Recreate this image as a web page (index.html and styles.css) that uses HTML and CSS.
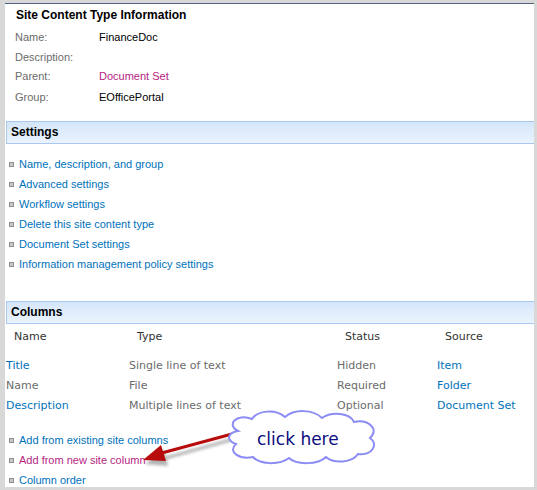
FILE: index.html
```html
<!DOCTYPE html>
<html>
<head>
<meta charset="utf-8">
<link rel="stylesheet" href="styles.css">
</head>
<body>
<div class="frame">
  <div class="page">
    <div class="info">
      <div class="info-title">Site Content Type Information</div>
      <div class="info-row r-name"><span class="lbl">Name:</span><span class="val">FinanceDoc</span></div>
      <div class="info-row r-desc"><span class="lbl">Description:</span><span class="val"></span></div>
      <div class="info-row r-parent"><span class="lbl">Parent:</span><a class="val visited">Document Set</a></div>
      <div class="info-row r-group"><span class="lbl">Group:</span><span class="val">EOfficePortal</span></div>
    </div>

    <div class="section-head settings-head">Settings</div>
    <ul class="links settings-links">
      <li><a>Name, description, and group</a></li>
      <li><a>Advanced settings</a></li>
      <li><a>Workflow settings</a></li>
      <li><a>Delete this site content type</a></li>
      <li><a>Document Set settings</a></li>
      <li><a>Information management policy settings</a></li>
    </ul>

    <div class="section-head columns-head">Columns</div>
    <div class="cols">
      <div class="col-row head">
        <span class="c1">Name</span><span class="c2">Type</span><span class="c3">Status</span><span class="c4">Source</span>
      </div>
      <div class="col-row data first">
        <a class="c1">Title</a><span class="c2">Single line of text</span><span class="c3">Hidden</span><a class="c4">Item</a>
      </div>
      <div class="col-row data">
        <span class="c1">Name</span><span class="c2">File</span><span class="c3">Required</span><a class="c4">Folder</a>
      </div>
      <div class="col-row data">
        <a class="c1">Description</a><span class="c2">Multiple lines of text</span><span class="c3">Optional</span><a class="c4">Document Set</a>
      </div>
    </div>
    <ul class="links column-links">
      <li><a>Add from existing site columns</a></li>
      <li><a class="visited">Add from new site column</a></li>
      <li><a>Column order</a></li>
    </ul>
  </div>

  <svg class="callout" width="537" height="490" viewBox="0 0 537 490">
    <defs>
      <filter id="sh" x="-20%" y="-50%" width="140%" height="200%">
        <feGaussianBlur stdDeviation="1.6"/>
      </filter>
    </defs>
    <g transform="translate(2,4)" opacity="0.45" filter="url(#sh)">
      <line x1="232" y1="435" x2="160" y2="455" stroke="#555" stroke-width="3"/>
      <polygon points="143,460 162,446 166,462" fill="#555"/>
    </g>
    <line x1="232" y1="434" x2="158" y2="454" stroke="#b80c0c" stroke-width="3"/>
    <polygon points="143,460 161,445 166,461" fill="#b80c0c"/>
    <path d="M238,431
             C226,425 236,413 252,419
             C258,410 276,409 285,417
             C294,409 313,409 322,418
             C332,411 350,413 354,422
             C368,419 380,429 370,438
             C379,444 372,456 358,454
             C352,463 334,464 326,457
             C318,465 296,465 289,458
             C280,465 260,465 253,457
             C240,460 227,452 236,444
             C226,440 227,433 238,431 Z"
          fill="#fff" stroke="#8c8cf5" stroke-width="2"/>
  </svg>
  <div class="callout-text">click here</div>
</div>
</body>
</html>
```
FILE: styles.css
```css
html, body {
  margin: 0;
  padding: 0;
}
body {
  font-family: "Liberation Sans", Arial, sans-serif;
  font-size: 11px;
  color: #000;
  background: #d8d8d8;
}
a {
  color: #0072bc;
  text-decoration: none;
}
a.visited {
  color: #b5257f;
}
.frame {
  position: relative;
  width: 537px;
  height: 490px;
  box-sizing: border-box;
  padding: 3px 3px 3px 5px;
  background: #d8d8d8;
  overflow: hidden;
}
.page {
  height: 100%;
  box-sizing: border-box;
  background: #fff;
  border-top: 1px solid #4d6580;
  display: flex;
  flex-direction: column;
}
.info {
  padding-left: 10px;
  padding-top: 1px;
}
.info-title {
  height: 20px;
  line-height: 20px;
  font-weight: bold;
  font-size: 12px;
  padding-left: 1px;
}
.info-row {
  display: flex;
  height: 20px;
  line-height: 20px;
}
.info-row .lbl {
  width: 84px;
  color: #6b6b6b;
}
.r-name { margin-top: 2px; }
.r-parent { height: 18px; line-height: 18px; }
.r-group { margin-top: 2px; }

.section-head {
  flex: none;
  margin-left: 1px;
  height: 21px;
  line-height: 21px;
  border: 1px solid #a9c8ee;
  border-right: none;
  background: linear-gradient(#d5e6fb, #eaf3fe);
  font-weight: bold;
  font-size: 12px;
  padding-left: 4px;
}
.settings-head { margin-top: 14px; }
.columns-head { margin-top: 27px; }

.links {
  list-style: none;
  margin: 0;
  padding: 0 0 0 4px;
}
.links li {
  display: flex;
  align-items: center;
  height: 20px;
}
.links li::before {
  content: "";
  width: 3px;
  height: 3px;
  border: 1px solid #8d8d8d;
  background: #c9c9c9;
  margin-right: 5px;
  margin-top: 1px;
}
.settings-links { margin-top: 10px; }
.column-links { margin-top: 14px; }

.cols {
  padding-left: 1px;
  font-family: "DejaVu Sans", Verdana, sans-serif;
  font-size: 11px;
}
.col-row {
  display: flex;
  height: 20px;
  line-height: 20px;
}
.col-row > * { display: block; }
.col-row .c1 { width: 123px; }
.col-row .c2 { width: 208px; }
.col-row .c3 { width: 100px; }
.col-row .c4 { flex: 1; white-space: nowrap; }
.col-row.head { margin-top: 3px; color: #333; }
.col-row.head > * { padding-left: 8px; box-sizing: border-box; }
.col-row.data { color: #6b6b6b; }
.col-row.data a { color: #0072bc; }
.col-row.data.first { margin-top: 9px; }

.callout {
  position: absolute;
  left: 0;
  top: 0;
  pointer-events: none;
}
.callout-text {
  position: absolute;
  left: 257px;
  top: 427px;
  font-family: "DejaVu Sans", sans-serif;
  font-size: 17px;
  color: #0c0c7e;
  line-height: 24px;
}
```
